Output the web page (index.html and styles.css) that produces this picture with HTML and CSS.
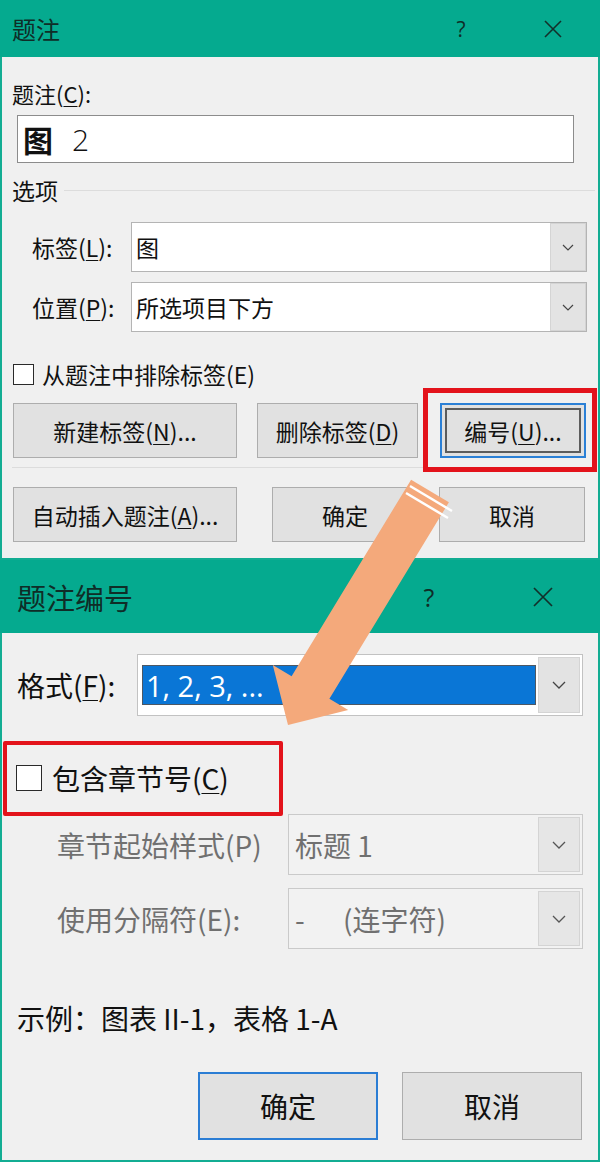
FILE: index.html
```html
<!DOCTYPE html>
<html lang="zh-CN">
<head>
    <meta charset="UTF-8">
    <title>题注 / 题注编号</title>
    <link rel="stylesheet" href="styles.css">
</head>
<body>
<div class="page">
    <!-- dialog 1: 题注 -->
    <section class="dlg dlg-caption">
        <div class="titlebar">
            <span class="title">题注</span>
            <span class="help">?</span>
            <span class="close">
                <svg width="20" height="20" viewBox="0 0 20 20"><path d="M2 2 L18 18 M18 2 L2 18" stroke="#12302a" stroke-width="1.6" fill="none"/></svg>
            </span>
        </div>
        <div class="dlg-body">
            <div class="label">题注(<u>C</u>):</div>
            <div class="textbox"><span class="fig">图</span><span class="num">2</span></div>
            <div class="group">
                <span>选项</span>
                <span class="group-line"></span>
            </div>
            <div class="field">
                <span class="field-label">标签(<u>L</u>):</span>
                <div class="combo">
                    <span class="combo-value">图</span>
                    <span class="combo-drop"><svg width="12" height="7" viewBox="0 0 12 7"><polyline points="1,1 6,6 11,1" fill="none" stroke="#444" stroke-width="1.2"/></svg></span>
                </div>
            </div>
            <div class="field">
                <span class="field-label">位置(<u>P</u>):</span>
                <div class="combo">
                    <span class="combo-value">所选项目下方</span>
                    <span class="combo-drop"><svg width="12" height="7" viewBox="0 0 12 7"><polyline points="1,1 6,6 11,1" fill="none" stroke="#444" stroke-width="1.2"/></svg></span>
                </div>
            </div>
            <div class="checkrow">
                <span class="check"></span>
                <span>从题注中排除标签(E)</span>
            </div>
            <div class="btnrow">
                <span class="btn btn-new">新建标签(<u>N</u>)...</span>
                <span class="btn btn-del">删除标签(<u>D</u>)</span>
                <span class="btn btn-num btn-focus">编号(<u>U</u>)...</span>
            </div>
            <div class="sep"></div>
            <div class="btnrow btnrow-2">
                <span class="btn btn-new">自动插入题注(<u>A</u>)...</span>
                <span class="btn btn-ok">确定</span>
                <span class="btn btn-cancel">取消</span>
            </div>
        </div>
    </section>

    <!-- dialog 2: 题注编号 -->
    <section class="dlg dlg-numbering">
        <div class="titlebar">
            <span class="title">题注编号</span>
            <span class="help">?</span>
            <span class="close">
                <svg width="22" height="22" viewBox="0 0 22 22"><path d="M2 2 L20 20 M20 2 L2 20" stroke="#12302a" stroke-width="1.7" fill="none"/></svg>
            </span>
        </div>
        <div class="dlg-body">
            <div class="field">
                <span class="field-label">格式(<u>F</u>):</span>
                <div class="combo">
                    <span class="combo-value"><span class="selected">1, 2, 3, ...</span></span>
                    <span class="combo-drop"><svg width="14" height="8" viewBox="0 0 14 8"><polyline points="1,1 7,7 13,1" fill="none" stroke="#444" stroke-width="1.3"/></svg></span>
                </div>
            </div>
            <div class="checkrow">
                <span class="check"></span>
                <span>包含章节号(<u>C</u>)</span>
            </div>
            <div class="field disabled">
                <span class="field-label">章节起始样式(P)</span>
                <div class="combo">
                    <span class="combo-value">标题 1</span>
                    <span class="combo-drop"><svg width="14" height="8" viewBox="0 0 14 8"><polyline points="1,1 7,7 13,1" fill="none" stroke="#555" stroke-width="1.3"/></svg></span>
                </div>
            </div>
            <div class="field disabled">
                <span class="field-label">使用分隔符(E):</span>
                <div class="combo">
                    <span class="combo-value sepval"><span class="dash">-</span>(连字符)</span>
                    <span class="combo-drop"><svg width="14" height="8" viewBox="0 0 14 8"><polyline points="1,1 7,7 13,1" fill="none" stroke="#555" stroke-width="1.3"/></svg></span>
                </div>
            </div>
            <div class="example">示例：图表 II-1，表格 1-A</div>
            <div class="btnrow">
                <span class="btn btn-ok btn-default">确定</span>
                <span class="btn btn-cancel">取消</span>
            </div>
        </div>
    </section>

    <!-- annotations drawn over the screenshots -->
    <div class="mark mark-num"></div>
    <div class="mark mark-chapter"></div>
    <svg class="arrow" width="600" height="1162" viewBox="0 0 600 1162">
        <polygon points="448.9,502.3 411.1,479.7 291.6,676.2 272.8,664.9 288,725 348.2,710.1 329.4,698.8" fill="#f4a97b"/>
        <line x1="410" y1="486" x2="452" y2="511" stroke="#fff" stroke-width="2.5"/>
        <line x1="406" y1="493" x2="448" y2="518" stroke="#fff" stroke-width="2.5"/>
    </svg>
</div>
</body>
</html>
```

FILE: styles.css
```css
* {
    box-sizing: border-box;
}
body {
    margin: 0;
    background: #f0f0f0;
    font-family: "Noto Sans CJK SC", "Noto Sans", sans-serif;
    color: #111;
}
.page {
    position: relative;
    width: 600px;
    height: 1162px;
    overflow: hidden;
}
u {
    text-decoration-thickness: 1px;
    text-underline-offset: 3px;
}

/* dialog frame */
.dlg {
    border: 2px solid #13ad93;
    border-top: 0;
    background: #f0f0f0;
}
.titlebar {
    display: flex;
    align-items: center;
    margin: 0 -2px;
    background: #05aa8f;
    color: #0f2d27;
}
.title {
    flex: 1;
}
.help {
    width: 40px;
    text-align: center;
    font-family: "Open Sans", sans-serif;
}
.close {
    width: 40px;
    display: flex;
    justify-content: center;
}
.dlg-body {
    display: flex;
    flex-direction: column;
}

/* controls */
.label {
    height: 30px;
    line-height: 30px;
}
.textbox {
    display: flex;
    align-items: center;
    background: #fff;
    border: 1px solid #8c8c8c;
}
.fig {
    font-weight: 700;
}
.num {
    font-family: "Open Sans", sans-serif;
    font-weight: 300;
}
.group {
    display: flex;
    align-items: center;
    height: 30px;
}
.group-line {
    flex: 1;
    height: 1px;
    margin: 0 -8px 0 6px;
    background: #dcdcdc;
}
.field {
    display: flex;
    align-items: center;
}
.field-label {
    flex: none;
}
.combo {
    flex: 1;
    display: flex;
    height: 100%;
    background: #fff;
    border: 1px solid #b4b4b4;
}
.combo-value {
    flex: 1;
    display: flex;
    align-items: center;
    white-space: pre;
}
.combo-drop {
    display: flex;
    align-items: center;
    justify-content: center;
    background: #e3e3e3;
    border: 1px solid #d4d4d4;
}
.checkrow {
    display: flex;
    align-items: center;
}
.check {
    background: #fff;
    border: 1px solid #2a2a2a;
}
.btnrow {
    display: flex;
}
.btn {
    display: flex;
    align-items: center;
    justify-content: center;
    background: #e1e1e1;
    border: 1px solid #adadad;
}
.btn-focus {
    border: 2px solid #2b80d6;
    box-shadow: inset 0 0 0 3px #e1e1e1, inset 0 0 0 5px #5c5c5c;
}
.sep {
    height: 1px;
    background: #dcdcdc;
}

/* dialog 1 sizes */
.dlg-caption {
    font-size: 23px;
    height: 560px;
}
.dlg-caption .titlebar {
    height: 57px;
    padding: 0 27px 0 12px;
    font-size: 24px;
}
.dlg-caption .help {
    font-size: 21px;
}
.dlg-caption .close {
    margin-left: 52px;
}
.dlg-caption .dlg-body {
    padding: 21px 11px 0 10px;
}
.dlg-caption .label {
    font-size: 22px;
}
.dlg-caption .textbox {
    height: 48px;
    margin: 7px 13px 0 5px;
    padding-left: 5px;
    font-size: 30px;
}
.dlg-caption .num {
    margin-left: 19px;
}
.dlg-caption .group {
    margin-top: 12px;
}
.dlg-caption .field {
    height: 50px;
    margin-top: 10px;
}
.dlg-caption .group + .field {
    margin-top: 17px;
}
.dlg-caption .field-label {
    width: 119px;
    padding-left: 20px;
}
.dlg-caption .combo-value {
    padding-left: 4px;
}
.dlg-caption .combo-drop {
    width: 36px;
}
.dlg-caption .checkrow {
    height: 30px;
    margin-top: 27px;
    font-size: 23px;
}
.dlg-caption .check {
    width: 21px;
    height: 21px;
    margin: 0 8px 0 1px;
}
.dlg-caption .btnrow {
    height: 55px;
    margin-top: 14px;
}
.dlg-caption .btnrow-2 {
    margin-top: 19px;
}
.dlg-caption .btn-new {
    width: 224px;
    margin-left: 1px;
}
.dlg-caption .btn-del {
    width: 161px;
    margin-left: 20px;
}
.dlg-caption .btn-num {
    width: 146px;
    margin-left: 22px;
}
.dlg-caption .btn-ok {
    width: 146px;
    margin-left: 35px;
}
.dlg-caption .btn-cancel {
    width: 146px;
    margin-left: 21px;
}
.dlg-caption .sep {
    margin-top: 9px;
}

/* dialog 2 sizes */
.dlg-numbering {
    font-size: 28px;
    height: 602px;
}
.dlg-numbering .titlebar {
    height: 73px;
    padding: 0 37px 0 17px;
    font-size: 29px;
}
.dlg-numbering .help {
    font-size: 25px;
}
.dlg-numbering .close {
    margin-left: 74px;
}
.dlg-numbering .dlg-body {
    padding: 21px 15px 0 15px;
}
.dlg-numbering .field {
    height: 62px;
}
.dlg-numbering .field-label {
    width: 120px;
}
.dlg-numbering .combo {
    border-color: #c2c2c2;
    padding: 2px;
}
.dlg-numbering .combo-value {
    padding: 8px 2px 8px 2px;
}
.dlg-numbering .combo-drop {
    width: 42px;
}
.selected {
    display: flex;
    align-items: center;
    width: 100%;
    height: 100%;
    padding-left: 3px;
    background: #0a76d6;
    border: 1px solid #4d5864;
    color: #fff;
    font-family: "Open Sans", sans-serif;
    font-size: 29px;
}
.dlg-numbering .checkrow {
    height: 36px;
    margin-top: 44px;
}
.dlg-numbering .check {
    width: 26px;
    height: 26px;
    margin: 0 10px 0 -1px;
}
.dlg-numbering .disabled {
    height: 61px;
    margin-top: 13px;
    color: #707070;
}
.dlg-numbering .checkrow + .disabled {
    margin-top: 18px;
}
.dlg-numbering .disabled .field-label {
    width: 271px;
    padding-left: 40px;
}
.dlg-numbering .disabled .combo {
    background: #f2f2f2;
    border-color: #cacaca;
}
.dlg-numbering .disabled .combo-value {
    padding-left: 4px;
}
.dlg-numbering .disabled .combo-drop {
    background: #e6e6e6;
}
.dlg-numbering .sepval {
    padding-left: 8px;
}
.dash {
    width: 48px;
}
.example {
    height: 36px;
    line-height: 36px;
    margin-top: 51px;
}
.dlg-numbering .btnrow {
    justify-content: flex-end;
    height: 68px;
    margin: 36px 1px 0 0;
}
.dlg-numbering .btn {
    width: 180px;
}
.dlg-numbering .btn-cancel {
    margin-left: 24px;
}
.btn-default {
    border: 2px solid #2b7dd4;
}

/* red annotation boxes and arrow */
.mark {
    position: absolute;
    border: 5px solid #e3131b;
}
.mark-num {
    left: 423px;
    top: 388px;
    width: 174px;
    height: 84px;
}
.mark-chapter {
    left: 3px;
    top: 741px;
    width: 280px;
    height: 75px;
    border-width: 4px;
    border-radius: 2px;
}
.arrow {
    position: absolute;
    left: 0;
    top: 0;
    pointer-events: none;
}
```
